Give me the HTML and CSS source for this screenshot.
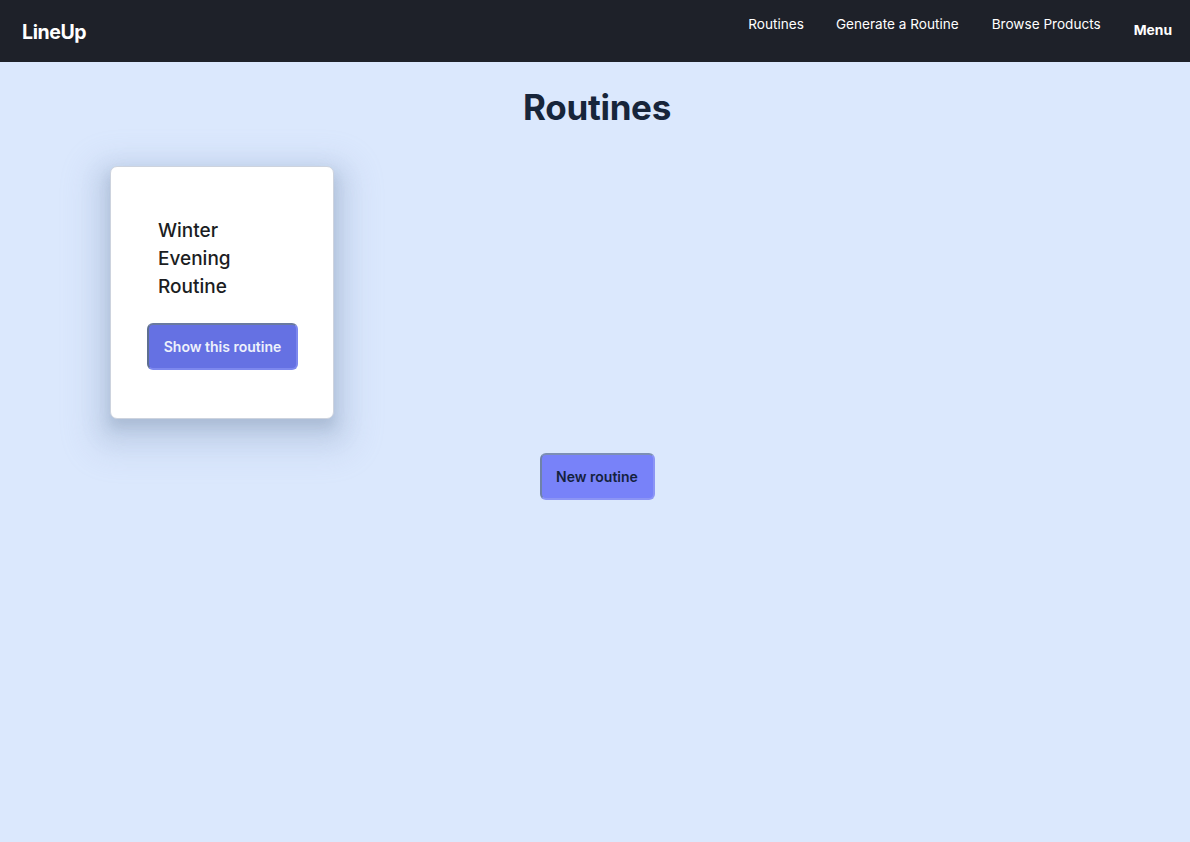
FILE: index.html
```html
<!DOCTYPE html>
<html lang="en">
<head>
<meta charset="utf-8">
<title>LineUp - Routines</title>
<link rel="stylesheet" href="styles.css">
</head>
<body>
<header class="navbar">
  <a class="brand" href="#">LineUp</a>
  <nav class="nav-links">
    <a href="#">Routines</a>
    <a href="#">Generate a Routine</a>
    <a href="#">Browse Products</a>
    <span class="menu">Menu</span>
  </nav>
</header>
<main class="page">
  <h1 class="page-title">Routines</h1>
  <section class="cards">
    <article class="card">
      <h2 class="card-title">Winter Evening Routine</h2>
      <button class="btn btn-show">Show this routine</button>
    </article>
  </section>
  <div class="actions">
    <button class="btn btn-new">New routine</button>
  </div>
</main>
</body>
</html>
```
FILE: styles.css
```css
* { box-sizing: border-box; }
html, body { margin: 0; padding: 0; }
body {
  background: #dbe8fd;
  font-family: Inter, "Noto Sans", "Liberation Sans", sans-serif;
  min-height: 842px;
}
.navbar {
  height: 62px;
  background: #1e2129;
  display: flex;
  align-items: center;
  justify-content: space-between;
  padding: 0 18px 0 22px;
}
.brand {
  color: #ffffff;
  font-weight: 700;
  font-size: 19.5px;
  letter-spacing: -0.4px;
  text-decoration: none;
  margin-top: 1px;
}
.nav-links {
  display: flex;
  align-items: center;
  gap: 33px;
}
.nav-links a {
  color: #ffffff;
  text-decoration: none;
  font-size: 13.6px;
  margin-top: -14px;
}
.nav-links a:first-child {
  margin-right: -1px;
}
.nav-links .menu {
  color: #ffffff;
  font-weight: 700;
  font-size: 13.8px;
  margin-top: -2px;
}
.page {
  display: flex;
  flex-direction: column;
  align-items: center;
  padding-left: 4px;
}
.page-title {
  margin: 24px 0 0;
  font-size: 35px;
  font-weight: 700;
  color: #17253a;
  letter-spacing: -0.3px;
  line-height: 42px;
}
.cards {
  align-self: stretch;
  display: flex;
  padding: 38px 0 0 106px;
}
.card {
  width: 224px;
  height: 253px;
  background: #ffffff;
  border: 1px solid #cdd3de;
  border-radius: 7px;
  box-shadow:
    0 8px 12px rgba(90, 110, 140, 0.18),
    0 10px 20px 10px rgba(120, 140, 175, 0.16),
    0 14px 30px 22px rgba(150, 170, 205, 0.2);
  padding: 50px 36px 0;
}
.card-title {
  margin: 0 0 22px 11px;
  width: 110px;
  font-size: 19px;
  font-weight: 500;
  line-height: 28px;
  color: #1b1d22;
}
.btn {
  font-family: inherit;
  font-size: 14px;
  font-weight: 600;
  height: 47px;
  border-radius: 6px;
  cursor: pointer;
}
.btn-show {
  width: 151px;
  background: #6571e3;
  color: #eef1fb;
  border: 2px solid #7d88ee;
  border-left-color: #5e6f90;
  border-top-color: #6a7aa0;
}
.actions {
  margin-top: 34px;
}
.btn-new {
  width: 115px;
  background: #7882f9;
  color: #14213d;
  border: 2px solid #8c95f5;
  border-left-color: #6f82a8;
  border-top-color: #7d8fb4;
}
```
